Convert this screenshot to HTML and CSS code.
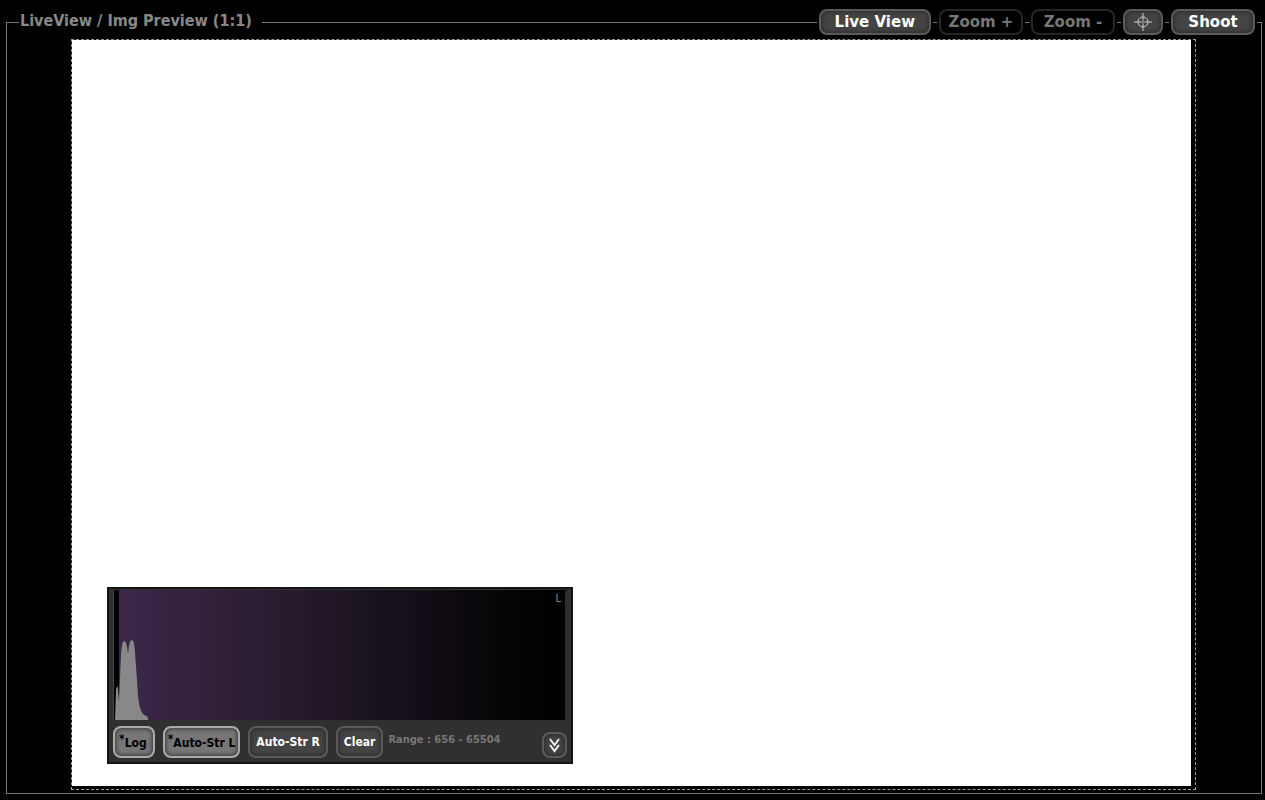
FILE: index.html
```
<!DOCTYPE html>
<html lang="en">
<head>
    <meta charset="utf-8">
    <meta name="viewport" content="width=device-width, initial-scale=1" />
    <title>LiveView</title>
    <link rel="stylesheet" href="styles.css">
</head>
<body>
    <main class="frame">
        <header class="bar">
            <h1 class="title">LiveView / Img Preview (1:1)</h1>
            <div class="tools">
                <button type="button" class="btn wide">Live View</button>
                <button type="button" class="btn" disabled>Zoom +</button>
                <button type="button" class="btn" disabled>Zoom -</button>
                <button type="button" class="btn icon" aria-label="Crosshair">
                    <svg width="18" height="18" viewBox="0 0 18 18" fill="none" stroke="#ccc">
                        <circle cx="9" cy="9" r="5" />
                        <path d="M9 0V7M9 11V18M0 9H7M11 9H18" />
                        <path d="M9 7V11M7 9H11" stroke="#999" />
                    </svg>
                </button>
                <button type="button" class="btn">Shoot</button>
            </div>
        </header>
        <section class="preview">
            <div class="image">
                <div class="histogram">
                    <div class="graph">
                        <svg class="curve" viewBox="0 0 454 130" preserveAspectRatio="none">
                            <path d="M1 0H6V130H1Z" fill="#000" />
                            <path d="M0 0H1V130H0Z" fill="#444" />
                            <path d="M2 130L3 100Q4 95 5 97L6 112L8 64Q9 51 11 51Q13 51 14 57L15 64L16 56Q17 50 19 50Q21 50 22 62L25 105Q26 119 30 124Q32 126 34 126Q35 127 35 130Z" fill="#888" />
                            <path d="M453 1V130" stroke="#555" />
                        </svg>
                        <span class="channel">L</span>
                    </div>
                    <div class="controls">
                        <button type="button" class="btn small on log" aria-pressed="true"><span class="star">*</span>Log</button>
                        <button type="button" class="btn small on" aria-pressed="true"><span class="star">*</span>Auto-Str L</button>
                        <button type="button" class="btn small">Auto-Str R</button>
                        <button type="button" class="btn small">Clear</button>
                        <span class="range">Range : 656 - 65504</span>
                        <button type="button" class="btn more" aria-label="Collapse">
                            <svg width="13" height="15" viewBox="0 0 13 15" fill="none" stroke="#eee" stroke-width="2">
                                <path d="M2 1L6.500 7L11 1M2 7L6.500 13L11 7" />
                            </svg>
                        </button>
                    </div>
                </div>
            </div>
        </section>
    </main>
</body>
</html>
```
FILE: styles.css
```
* {
    box-sizing: border-box;
}

body {
    display: flex;
    min-height: 100vh;
    margin: 0;
    padding: 22px 3px 6px 6px;
    background-color: #000;
    font-family: "DejaVu Sans Condensed", "DejaVu Sans", Verdana, sans-serif;
    font-weight: bold;
}

.frame {
    flex: 1;
    display: flex;
    flex-direction: column;
    border: 1px solid #777;
}

/* sits on the top border line */
.bar {
    display: flex;
    justify-content: space-between;
    align-items: flex-start;
    margin: -14px 0 4px;
    padding: 0 6px 0 12px;
}

.title {
    margin: 0;
    padding: 0 10px 0 1px;
    background-color: #000;
    color: #888;
    font-size: 16px;
    line-height: 24px;
}

.tools {
    display: flex;
    gap: 8px;
}

.btn {
    min-width: 84px;
    height: 26px;
    padding: 0 14px;
    border: 2px solid #5a5a5a;
    border-radius: 8px;
    background-color: #444;
    box-shadow: inset 0 0 5px #222, 0 0 0 2px #000;
    color: #fff;
    font-family: "DejaVu Sans", Verdana, sans-serif;
    font-size: 15px;
    font-weight: bold;
}

.btn:disabled {
    padding: 0 7px;
    border-color: #262626;
    background-color: #000;
    box-shadow: 0 0 0 2px #000;
    color: #777;
}

.icon {
    display: flex;
    align-items: center;
    min-width: 0;
    padding: 0 9px;
}

.preview {
    flex: 1;
    display: flex;
    margin: 0 65px 3px 64px;
    padding: 0 4px 3px 0;
    border: 1px dashed #999;
}

.image {
    position: relative;
    flex: 1;
    background-color: #fff;
}

.histogram {
    position: absolute;
    left: 35px;
    bottom: 22px;
    width: 466px;
    padding: 1px 4px 4px;
    border: 2px solid #141414;
    background-color: #303030;
}

.graph {
    position: relative;
    height: 130px;
    background-image: linear-gradient(to right, #3d284b, #261a2c 40%, #150f19 65%, #030303 90%, #000);
}

.curve {
    display: block;
    width: 100%;
    height: 100%;
}

.channel {
    position: absolute;
    top: 2px;
    right: 6px;
    color: #888;
    font-size: 11px;
    font-weight: normal;
}

.controls {
    display: flex;
    align-items: center;
    gap: 8px;
    padding-top: 6px;
}

.small {
    min-width: 0;
    height: 32px;
    padding: 0 6px;
    box-shadow: inset 0 0 5px #222;
    font-family: "DejaVu Sans Condensed", "DejaVu Sans", Verdana, sans-serif;
    font-size: 12px;
}

.on {
    padding: 0 3px 2px;
    border-color: #aaa;
    background-color: #777;
    color: #000;
}

.log {
    padding: 0 6px 2px 4px;
}

.star {
    vertical-align: 4px;
}

.range {
    margin-left: -3px;
    color: #777;
    font-size: 11px;
    line-height: 28px;
    align-self: flex-start;
}

.more {
    display: flex;
    align-self: flex-end;
    align-items: center;
    justify-content: center;
    min-width: 0;
    width: 25px;
    margin-left: auto;
    padding: 0;
    box-shadow: inset 0 0 5px #222;
}
```
